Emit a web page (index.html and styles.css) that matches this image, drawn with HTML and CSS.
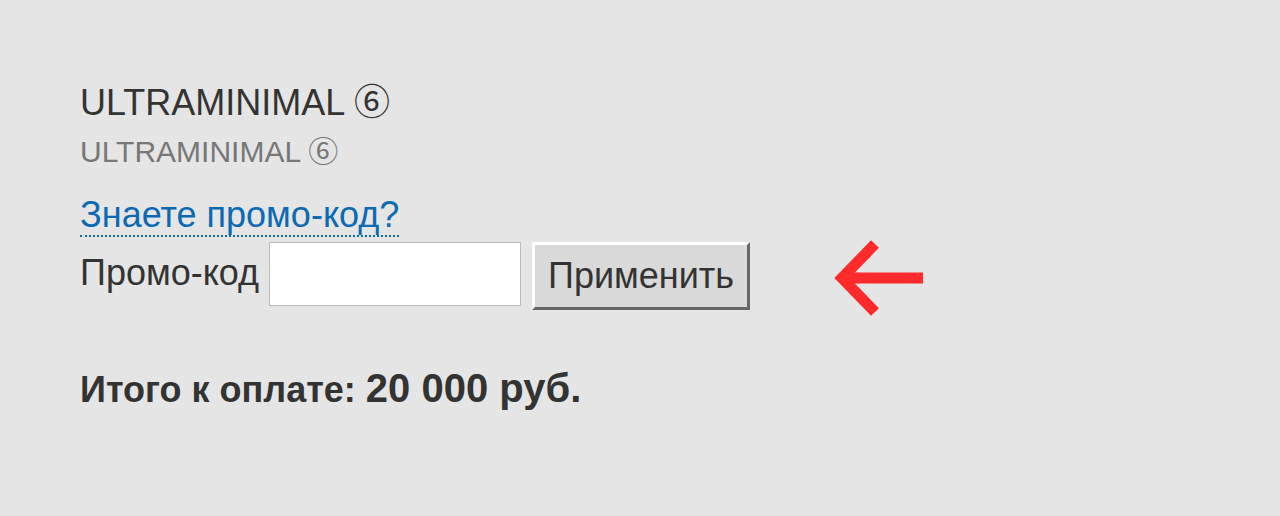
FILE: index.html
```html
<!DOCTYPE html>
<html lang="ru">
<head>
    <meta charset="UTF-8">
    <title>Оплата</title>
    <link rel="stylesheet" href="styles.css">
</head>
<body>
    <div id="order">
        <h1 class="product">ULTRAMINIMAL <span class="num">⑥</span></h1>
        <div class="product-sub">ULTRAMINIMAL <span class="num">⑥</span></div>

        <!-- promo -->
        <div class="promo">
            <a href="#" class="promo-link">Знаете промо-код?</a>
        </div>
        <div class="promo-row">
            <label for="promo.code">Промо-код</label>
            <input type="text" id="promo.code" class="promo-input" />
            <input type="button" value="Применить" class="promo-apply" />
            <svg class="hint-arrow" width="94" height="84" viewBox="0 0 94 84">
                <path d="M14 42 H92" stroke="#ff2a2a" stroke-width="11" fill="none" />
                <path d="M44 8 L11 42 L44 76" stroke="#ff2a2a" stroke-width="11" fill="none" stroke-miterlimit="10" />
            </svg>
        </div>

        <div class="total">Итого к оплате: <span class="sum">20 000 руб.</span></div>
    </div>
</body>
</html>
```

FILE: styles.css
```css
body {
    margin: 0;
    background-color: rgb(229, 229, 229);
    color: rgb(51, 51, 51);
    font-family: "Liberation Sans", Arial, sans-serif;
}
#order {
    padding: 80px 80px;
}
.num {
    font-family: "Noto Sans CJK JP", sans-serif;
    line-height: 1;
}
.product {
    margin: 0;
    font-size: 36px;
    font-weight: normal;
    line-height: 46px;
}
.product-sub {
    margin-top: 8px;
    font-size: 30px;
    color: rgb(119, 119, 119);
    line-height: 36px;
}
.promo {
    margin-top: 23px;
    font-size: 36px;
    line-height: 44px;
}
.promo-link {
    color: rgb(12, 106, 178);
    text-decoration: none;
    border-bottom: 2px dotted rgb(12, 106, 178);
}
.promo-row {
    display: flex;
    align-items: flex-start;
    margin-top: 5px;
    font-size: 36px;
}
.promo-row label {
    line-height: 62px;
    margin-right: 10px;
}
.promo-input {
    width: 252px;
    height: 64px;
    box-sizing: border-box;
    border: 1px solid rgb(187, 187, 187);
    background-color: rgb(255, 255, 255);
    margin: 0 11px 0 0;
    padding: 0;
}
.promo-apply {
    height: 68px;
    padding: 0 13px;
    margin: 0;
    font-family: "Liberation Sans", Arial, sans-serif;
    font-size: 36px;
    color: rgb(51, 51, 51);
    background-color: rgb(217, 217, 217);
    border-style: solid;
    border-width: 3px;
    border-color: rgb(255, 255, 255) rgb(102, 102, 102) rgb(102, 102, 102) rgb(255, 255, 255);
    cursor: pointer;
}
.hint-arrow {
    margin-left: 81px;
    margin-top: -6px;
    margin-bottom: -10px;
}
.total {
    margin-top: 54px;
    font-size: 36px;
    line-height: 48px;
    font-weight: bold;
}
.total .sum {
    font-size: 40px;
}
```
